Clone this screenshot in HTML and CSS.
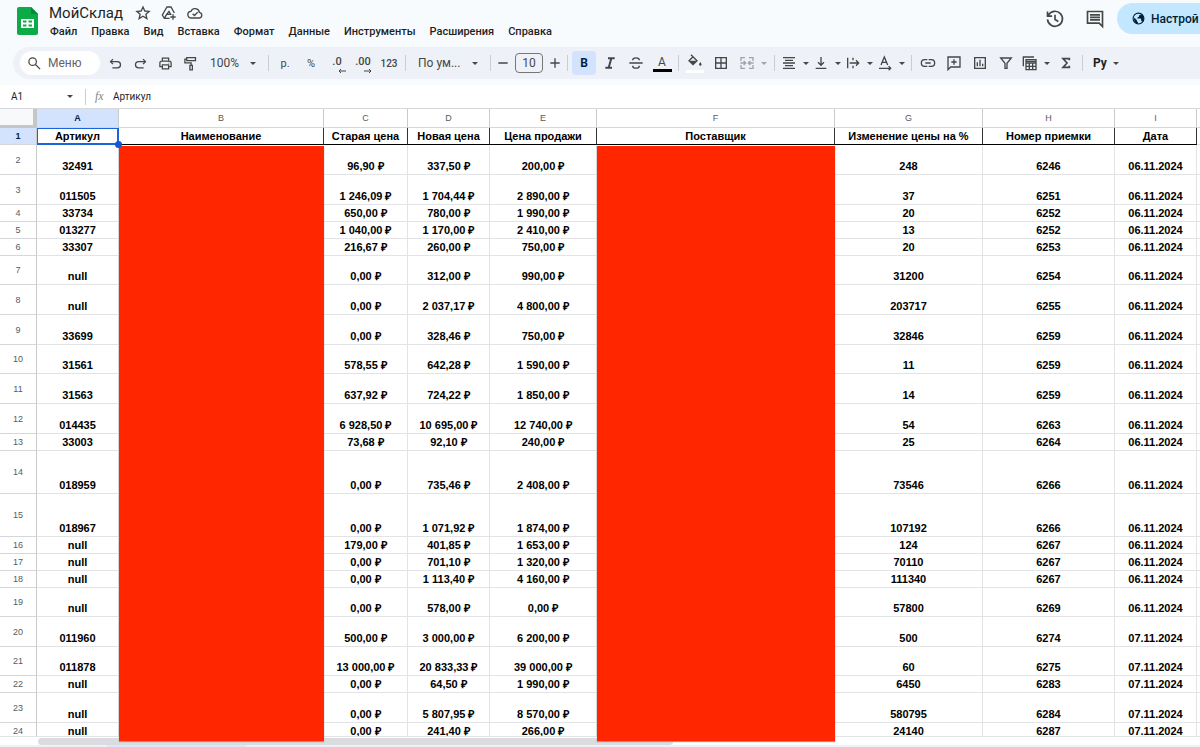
FILE: index.html
```
<!DOCTYPE html>
<html lang="ru">
<head>
  <meta charset="UTF-8" />
  <meta name="viewport" content="width=device-width, initial-scale=1.0"/>
  <title>МойСклад</title>
  <link rel="stylesheet" href="styles.css">
</head>
<body>
  <header>
    <svg class="logo" viewBox="0 0 21 28">
      <path fill="#0cab47" d="M2 0h12l7 7v19a2 2 0 0 1-2 2H2a2 2 0 0 1-2-2V2a2 2 0 0 1 2-2z"/>
      <path fill="#078a38" d="M14 0l7 7h-7z"/>
      <path fill="#fff" fill-rule="evenodd" d="M4 12h13v9H4zM6 13.500v2h3.500v-2zM11.500 13.500v2H15v-2zM6 17.500v2h3.500v-2zM11.500 17.500v2H15v-2z"/>
    </svg>
    <div class="doc">
      <div class="title-row">
        <h1>МойСклад</h1>
        <button aria-label="Пометить"><svg class="icon" viewBox="0 0 24 24"><path d="M12 3l2.700 6 6.500.600-4.900 4.300 1.500 6.400L12 16.900l-5.800 3.400 1.500-6.400L2.800 9.600 9.300 9z"/></svg></button>
        <button aria-label="Переместить"><svg class="icon" viewBox="0 0 24 24"><path d="M13 20H5l-3-5L9 3h6l5 9M5 20l3.500-6M8.500 14h6L12 9.500 8.500 14M18 14v8M14 18h8"/></svg></button>
        <button aria-label="Статус документа"><svg class="icon" viewBox="0 0 24 24"><path d="M6.500 19.500a5 5 0 0 1-.500-10 6.500 6.500 0 0 1 12.500 1.500 4.300 4.300 0 0 1 0 8.500zM8.500 13l2.700 2.700L16 11"/></svg></button>
      </div>
      <nav>
        <a href="#">Файл</a>
        <a href="#">Правка</a>
        <a href="#">Вид</a>
        <a href="#">Вставка</a>
        <a href="#">Формат</a>
        <a href="#">Данные</a>
        <a href="#">Инструменты</a>
        <a href="#">Расширения</a>
        <a href="#">Справка</a>
      </nav>
    </div>
    <div class="actions">
      <button aria-label="История версий"><svg class="icon big" viewBox="0 0 24 24"><path d="M4 7.500a9 9 0 1 1-1 5M3 3v5.500h5.500M12 7v5.500l4 2.500"/></svg></button>
      <button aria-label="Комментарии"><svg class="icon big" viewBox="0 0 24 24"><path d="M3 3h18v18l-4-4H3zM6 7h12M6 10h12M6 13h12"/></svg></button>
      <button class="share"><svg class="globe" viewBox="0 0 24 24"><circle cx="12" cy="12" r="10"/><path d="M4 10l5 5v2l2 2v3C6 21 3 17 4 10zM16 3v1c0 2-1 2-3 2v2c0 1-1 2-3 2v2h5c1 0 2 1 2 2v3h1c1 0 2 1 2 1 4-6 1-13-4-15z"/></svg>Настрой</button>
    </div>
  </header>

  <div class="toolbar">
    <label class="search">
      <svg class="icon" viewBox="0 0 24 24"><circle cx="9" cy="9" r="6"/><path d="M13.500 13.500l7.500 7.500"/></svg>
      <input type="text" placeholder="Меню" aria-label="Меню">
    </label>
    <div class="group history">
      <button aria-label="Отменить"><svg class="icon" viewBox="0 0 24 24"><path d="M8 5L4 9l4 4M4 9h11a5 5 0 0 1 0 10H7"/></svg></button>
      <button aria-label="Повторить"><svg class="icon" viewBox="0 0 24 24"><path d="M16 5l4 4-4 4M20 9H9a5 5 0 0 0 0 10h8"/></svg></button>
      <button aria-label="Печать"><svg class="icon" viewBox="0 0 24 24"><path d="M7 8V3.500h10V8M7 17H3v-6a3 3 0 0 1 3-3h12a3 3 0 0 1 3 3v6h-4M7 14h10v6.500H7zM17 11.500h1"/></svg></button>
      <button aria-label="Копировать форматирование"><svg class="icon" viewBox="0 0 24 24"><path d="M6 2.500h14v5H6zM6 5H3v6h10v4M11 15h4v7h-4z"/></svg></button>
    </div>
    <div class="drop zoom"><select aria-label="Масштаб"><option>100%</option></select></div>
    <hr>
    <div class="group">
      <button class="fmt">р.</button>
      <button class="fmt">%</button>
      <button class="fmt dec" aria-label="Меньше знаков">.0<svg viewBox="0 0 10 6"><path d="M9 3H2M4 1L2 3l2 2"/></svg></button>
      <button class="fmt dec" aria-label="Больше знаков">.00<svg viewBox="0 0 10 6"><path d="M1 3h7M6 1l2 2-2 2"/></svg></button>
      <button class="num">123</button>
    </div>
    <hr>
    <div class="drop font"><select aria-label="Шрифт"><option>По ум...</option></select></div>
    <hr>
    <div class="group size">
      <button aria-label="Уменьшить"><svg class="icon" viewBox="0 0 24 24"><path d="M5 12h14"/></svg></button>
      <input type="text" value="10" aria-label="Размер шрифта">
      <button aria-label="Увеличить"><svg class="icon" viewBox="0 0 24 24"><path d="M5 12h14M12 5v14"/></svg></button>
    </div>
    <hr>
    <div class="group">
      <button class="on">B</button>
      <button aria-label="Курсив"><svg class="icon" viewBox="0 0 24 24"><path stroke-width="3" d="M9 5h10M5 19h10M14 5l-4 14"/></svg></button>
      <button aria-label="Зачёркнутый"><svg class="icon" viewBox="0 0 24 24"><path d="M2 12h20M17 8c0-5-10-5-10 0M7 16c0 5 10 5 10 0"/></svg></button>
      <button class="color"><span>A</span></button>
    </div>
    <hr>
    <div class="group">
      <button class="fill" aria-label="Цвет заливки"><svg class="icon" viewBox="0 0 24 24"><path d="M6 1l9 9-6 6-6-6 6-6"/><path class="solid" d="M3.500 10H15l-6 6zM20 12c-3 4-2 5.500 0 5.500s3-1.500 0-5.500z"/></svg></button>
      <button aria-label="Границы"><svg class="icon" viewBox="0 0 24 24"><path d="M4 4h16v16H4zM12 4v16M4 12h16"/></svg></button>
      <button class="more merge" aria-label="Объединить"><svg class="icon" viewBox="0 0 24 24"><path d="M9 4H3v5M15 4h6v5M9 20H3v-5M15 20h6v-5M2 12h7M7 9l3 3-3 3M22 12h-7M17 9l-3 3 3 3"/></svg></button>
    </div>
    <hr>
    <div class="group tight">
      <button class="more" aria-label="По горизонтали"><svg class="icon" viewBox="0 0 24 24"><path d="M3 4h18M6 8h12M3 12h18M6 16h12M3 20h18"/></svg></button>
      <button class="more" aria-label="По вертикали"><svg class="icon" viewBox="0 0 24 24"><path d="M4 20h16M12 3v12M7.500 11l4.500 4.500 4.500-4.500"/></svg></button>
      <button class="more" aria-label="Перенос"><svg class="icon" viewBox="0 0 24 24"><path d="M4 4v16M12 4v4M12 16v4M7 12h13M16.500 8l4 4-4 4"/></svg></button>
      <button class="more" aria-label="Поворот"><svg class="icon" viewBox="0 0 24 24"><path d="M6 15l5-12 5 12M8 11h6M3 20h17M17.500 17l3 3-3 3"/></svg></button>
    </div>
    <hr>
    <div class="group">
      <button aria-label="Ссылка"><svg class="icon" viewBox="0 0 24 24"><path d="M11 7H7a5 5 0 0 0 0 10h4M13 7h4a5 5 0 0 1 0 10h-4M8 12h8"/></svg></button>
      <button aria-label="Комментарий"><svg class="icon" viewBox="0 0 24 24"><path d="M3 3h18v15H7l-4 4zM12 6.500v8M8 10.500h8"/></svg></button>
      <button aria-label="Диаграмма"><svg class="icon" viewBox="0 0 24 24"><path d="M4 4h16v16H4zM8 11v6M12 7v10M16 13v4"/></svg></button>
      <button aria-label="Фильтр"><svg class="icon" viewBox="0 0 24 24"><path d="M4 4.500h16l-6.500 8V20h-3v-7.500z"/></svg></button>
      <button class="more" aria-label="Фильтры"><svg class="icon" viewBox="0 0 24 24"><path d="M2 17V3h16M6 7h15v15H6zM6 12h15M6 17h15M11 12v10M16 12v10M6 9.500h15"/></svg></button>
      <button aria-label="Функции"><svg class="icon" viewBox="0 0 24 24"><path stroke-width="2.500" d="M17 8V5.500H7.500l6 6.500-6 6.500H17V16"/></svg></button>
    </div>
    <hr>
    <button class="more py">Pу</button>
  </div>

  <div class="formula">
    <div class="drop name"><select aria-label="Ячейка"><option>A1</option></select></div>
    <hr>
    <label for="fx">fx</label>
    <input id="fx" type="text" value="Артикул">
  </div>

  <main>
    <div class="grid">
      <table>
        <colgroup>
          <col class="c-num"><col class="c-a"><col class="c-b"><col class="c-c"><col class="c-d"><col class="c-e"><col class="c-f"><col class="c-g"><col class="c-h"><col class="c-i"><col>
        </colgroup>
        <thead>
          <tr><th class="corner"></th><th class="sel">A</th><th>B</th><th>C</th><th>D</th><th>E</th><th>F</th><th>G</th><th>H</th><th>I</th><th></th></tr>
        </thead>
        <tbody>
          <tr class="head"><th class="sel">1</th><td class="active">Артикул</td><td>Наименование</td><td>Старая цена</td><td>Новая цена</td><td>Цена продажи</td><td>Поставщик</td><td>Изменение цены на %</td><td>Номер приемки</td><td>Дата</td><td></td></tr>
          <tr class="tall"><th>2</th><td>32491</td><td></td><td>96,90 ₽</td><td>337,50 ₽</td><td>200,00 ₽</td><td></td><td>248</td><td>6246</td><td>06.11.2024</td><td></td></tr>
          <tr class="tall"><th>3</th><td>011505</td><td></td><td>1 246,09 ₽</td><td>1 704,44 ₽</td><td>2 890,00 ₽</td><td></td><td>37</td><td>6251</td><td>06.11.2024</td><td></td></tr>
          <tr><th>4</th><td>33734</td><td></td><td>650,00 ₽</td><td>780,00 ₽</td><td>1 990,00 ₽</td><td></td><td>20</td><td>6252</td><td>06.11.2024</td><td></td></tr>
          <tr><th>5</th><td>013277</td><td></td><td>1 040,00 ₽</td><td>1 170,00 ₽</td><td>2 410,00 ₽</td><td></td><td>13</td><td>6252</td><td>06.11.2024</td><td></td></tr>
          <tr><th>6</th><td>33307</td><td></td><td>216,67 ₽</td><td>260,00 ₽</td><td>750,00 ₽</td><td></td><td>20</td><td>6253</td><td>06.11.2024</td><td></td></tr>
          <tr class="mid"><th>7</th><td>null</td><td></td><td>0,00 ₽</td><td>312,00 ₽</td><td>990,00 ₽</td><td></td><td>31200</td><td>6254</td><td>06.11.2024</td><td></td></tr>
          <tr class="tall"><th>8</th><td>null</td><td></td><td>0,00 ₽</td><td>2 037,17 ₽</td><td>4 800,00 ₽</td><td></td><td>203717</td><td>6255</td><td>06.11.2024</td><td></td></tr>
          <tr class="tall"><th>9</th><td>33699</td><td></td><td>0,00 ₽</td><td>328,46 ₽</td><td>750,00 ₽</td><td></td><td>32846</td><td>6259</td><td>06.11.2024</td><td></td></tr>
          <tr class="mid"><th>10</th><td>31561</td><td></td><td>578,55 ₽</td><td>642,28 ₽</td><td>1 590,00 ₽</td><td></td><td>11</td><td>6259</td><td>06.11.2024</td><td></td></tr>
          <tr class="tall"><th>11</th><td>31563</td><td></td><td>637,92 ₽</td><td>724,22 ₽</td><td>1 850,00 ₽</td><td></td><td>14</td><td>6259</td><td>06.11.2024</td><td></td></tr>
          <tr class="tall"><th>12</th><td>014435</td><td></td><td>6 928,50 ₽</td><td>10 695,00 ₽</td><td>12 740,00 ₽</td><td></td><td>54</td><td>6263</td><td>06.11.2024</td><td></td></tr>
          <tr><th>13</th><td>33003</td><td></td><td>73,68 ₽</td><td>92,10 ₽</td><td>240,00 ₽</td><td></td><td>25</td><td>6264</td><td>06.11.2024</td><td></td></tr>
          <tr class="high"><th>14</th><td>018959</td><td></td><td>0,00 ₽</td><td>735,46 ₽</td><td>2 408,00 ₽</td><td></td><td>73546</td><td>6266</td><td>06.11.2024</td><td></td></tr>
          <tr class="high"><th>15</th><td>018967</td><td></td><td>0,00 ₽</td><td>1 071,92 ₽</td><td>1 874,00 ₽</td><td></td><td>107192</td><td>6266</td><td>06.11.2024</td><td></td></tr>
          <tr><th>16</th><td>null</td><td></td><td>179,00 ₽</td><td>401,85 ₽</td><td>1 653,00 ₽</td><td></td><td>124</td><td>6267</td><td>06.11.2024</td><td></td></tr>
          <tr><th>17</th><td>null</td><td></td><td>0,00 ₽</td><td>701,10 ₽</td><td>1 320,00 ₽</td><td></td><td>70110</td><td>6267</td><td>06.11.2024</td><td></td></tr>
          <tr><th>18</th><td>null</td><td></td><td>0,00 ₽</td><td>1 113,40 ₽</td><td>4 160,00 ₽</td><td></td><td>111340</td><td>6267</td><td>06.11.2024</td><td></td></tr>
          <tr class="mid"><th>19</th><td>null</td><td></td><td>0,00 ₽</td><td>578,00 ₽</td><td>0,00 ₽</td><td></td><td>57800</td><td>6269</td><td>06.11.2024</td><td></td></tr>
          <tr class="tall"><th>20</th><td>011960</td><td></td><td>500,00 ₽</td><td>3 000,00 ₽</td><td>6 200,00 ₽</td><td></td><td>500</td><td>6274</td><td>07.11.2024</td><td></td></tr>
          <tr class="mid"><th>21</th><td>011878</td><td></td><td>13 000,00 ₽</td><td>20 833,33 ₽</td><td>39 000,00 ₽</td><td></td><td>60</td><td>6275</td><td>07.11.2024</td><td></td></tr>
          <tr><th>22</th><td>null</td><td></td><td>0,00 ₽</td><td>64,50 ₽</td><td>1 990,00 ₽</td><td></td><td>6450</td><td>6283</td><td>07.11.2024</td><td></td></tr>
          <tr class="tall"><th>23</th><td>null</td><td></td><td>0,00 ₽</td><td>5 807,95 ₽</td><td>8 570,00 ₽</td><td></td><td>580795</td><td>6284</td><td>07.11.2024</td><td></td></tr>
          <tr><th>24</th><td>null</td><td></td><td>0,00 ₽</td><td>241,40 ₽</td><td>266,00 ₽</td><td></td><td>24140</td><td>6287</td><td>07.11.2024</td><td></td></tr>
        </tbody>
      </table>
    </div>
    <div class="scroll"><div class="thumb"></div></div>
    <div class="tabs"><div class="tab"></div></div>
    <!-- hidden columns B and F -->
    <div class="cover cover-b"></div>
    <div class="cover cover-f"></div>
  </main>
</body>
</html>
```
FILE: styles.css
```
* { margin: 0; padding: 0; box-sizing: border-box; }
body { height: 100vh; display: flex; flex-direction: column; overflow: hidden; background: #f8fbfe; color: #1f1f1f; font-family: Roboto, "Liberation Sans", sans-serif; font-size: 12px; }
button, input, select { font: inherit; color: inherit; border: none; background: none; outline: none; }
button { display: flex; align-items: center; justify-content: center; flex-shrink: 0; cursor: pointer; }
a { color: inherit; text-decoration: none; }
svg { flex-shrink: 0; }
hr { width: 1px; height: 16px; margin: 0 4px; border: none; background: #c9ccd1; flex-shrink: 0; }

.icon { width: 16px; height: 16px; fill: none; stroke: #444746; stroke-width: 2; }
.icon.big { width: 20px; height: 20px; }
.icon .solid { fill: #444746; stroke: none; }

header { display: flex; height: 47px; flex-shrink: 0; padding-left: 17px; }
.logo { width: 21px; height: 28px; margin-top: 7px; }
.doc { margin-left: 11px; padding-top: 3px; }
.title-row { display: flex; align-items: center; gap: 10px; height: 20px; }
h1 { font-size: 15px; font-weight: 400; margin-right: 2px; }
nav { display: flex; gap: 14px; padding-left: 1px; font-size: 11px; line-height: 18px; font-weight: 500; }
.actions { margin-left: auto; display: flex; align-items: center; gap: 20px; height: 31px; margin-top: 3px; }
.share { width: 83px; height: 31px; justify-content: flex-start; gap: 6px; margin-left: -8px; padding-left: 15px; white-space: nowrap; font-weight: 500; color: #001d35; background: #c2e7ff; border-radius: 16px 0 0 16px; }
.globe { width: 13px; height: 13px; stroke: #001d35; stroke-width: 2; fill: none; }
.globe path { fill: #001d35; stroke: none; }

.toolbar { display: flex; align-items: center; height: 32px; flex-shrink: 0; margin-left: 13px; padding-left: 7px; overflow: hidden; background: #eef2f8; border-radius: 16px 0 0 16px; color: #444746; }
.search { display: flex; align-items: center; gap: 6px; width: 80px; height: 24px; padding-left: 7px; margin-right: 3px; flex-shrink: 0; background: #fff; border-radius: 12px; }
.search input { width: 48px; }
.search input::placeholder { color: #5f6368; opacity: 1; }
.search .icon, .history .icon { width: 15px; height: 15px; }
.group { display: flex; align-items: center; gap: 2px; flex-shrink: 0; }
.group.history { gap: 1px; }
.group.tight { gap: 0; }
.group button { width: 24px; height: 24px; border-radius: 4px; }
.drop { position: relative; display: flex; align-items: center; flex-shrink: 0; }
.drop select { width: 100%; appearance: none; padding-left: 8px; }
.drop::after, .more::after { content: ""; border: 3px solid transparent; border-top-color: #444746; border-bottom: none; }
.drop::after { position: absolute; right: 8px; pointer-events: none; }
.zoom { width: 62px; }
.font { width: 76px; }
.group .more, .more { width: 32px; gap: 6px; }
.group .merge { width: 35px; opacity: 0.45; }
.num { font-size: 10px; font-weight: 500; }
.fmt { font-size: 11px; }
.group .dec { position: relative; padding-bottom: 3px; font-weight: 500; }
.dec svg { position: absolute; right: 2px; bottom: 1px; width: 10px; height: 6px; fill: none; stroke: #444746; }
.group.size { gap: 4px; }
.group.size button { width: 16px; }
.size input { width: 28px; height: 20px; text-align: center; border: 1px solid #747775; border-radius: 4px; }
.group .on { font-weight: 700; color: #041e49; background: #d3e3fd; }
.color span { width: 19px; line-height: 14px; border-bottom: 3px solid #000; }
.group .fill { flex-direction: column; }
.fill::after { content: ""; width: 18px; height: 3px; background: #fff; }
.more.py { width: 38px; font-weight: 700; color: #1f1f1f; }

.formula { display: flex; align-items: center; height: 23px; margin-top: 6px; flex-shrink: 0; background: #fff; font-size: 10px; }
.name { width: 81px; }
.name select { padding-left: 11px; }
.formula label { width: 23px; padding-left: 5px; font: italic 12px "Liberation Serif", serif; color: #80868b; }
.formula input { flex: 1; }

main { position: relative; flex: 1; min-height: 0; display: flex; flex-direction: column; border-top: 1px solid #d5d7da; background: #fff; }
.grid { flex: 1; min-height: 0; overflow: hidden; }
table { width: 100%; table-layout: fixed; border-collapse: separate; border-spacing: 0; font-family: "Liberation Sans", sans-serif; }
.c-num { width: 37px; }
.c-a, .c-d, .c-i { width: 82px; }
.c-b { width: 205px; }
.c-c { width: 84px; }
.c-e { width: 107px; }
.c-f { width: 238px; }
.c-g { width: 148px; }
.c-h { width: 132px; }
th { font-size: 9px; line-height: 10px; font-weight: 400; color: #575b5f; border-right: 1px solid #c8cbcc; border-bottom: 1px solid #d5d7da; }
thead th { height: 19px; }
th.sel { font-weight: 700; color: #041e49; background: #d3e3fd; }
.corner { background: #f8f9fa; border-right: 4px solid #c4c7c5; border-bottom: 3px solid #c4c7c5; }
tr { height: 17px; }
.mid { height: 29px; }
.tall { height: 30px; }
.high { height: 43px; }
td { vertical-align: bottom; text-align: center; white-space: nowrap; font-size: 11px; line-height: 16px; font-weight: 700; color: #000; border-right: 1px solid #e1e3e4; border-bottom: 1px solid #e1e3e4; }
.head td { border-right-color: #333; border-bottom-color: #000; }
.head td:last-child { border-color: #e1e3e4; }
.head .active { position: relative; border-color: #1a66d9; box-shadow: inset 0 0 0 1px #1a66d9; }
.active::after { content: ""; position: absolute; right: -4px; bottom: -4px; width: 7px; height: 7px; border-radius: 50%; background: #1558d0; z-index: 2; }
th:last-child, td:last-child { border-right: none; }

.scroll { height: 9px; flex-shrink: 0; padding: 1px 0 0 38px; border-top: 1px solid #e1e3e4; }
.thumb { width: 635px; height: 7px; border-radius: 4px; background: #dadce0; }
.tabs { height: 2px; flex-shrink: 0; padding-left: 107px; background: #edf2f7; }
.tab { width: 139px; height: 2px; background: #dce7f7; }
.cover { position: absolute; top: 37px; bottom: 6px; background: #ff2600; box-shadow: 0 1px 1px #999; }
.cover-b { left: 119px; width: 205px; }
.cover-f { left: 597px; width: 238px; }
```
